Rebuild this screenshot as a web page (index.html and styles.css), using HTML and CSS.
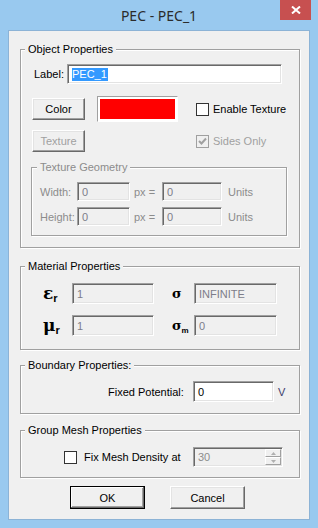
FILE: index.html
```html
<!DOCTYPE html>
<html lang="en">
<head>
    <meta charset="UTF-8">
    <meta name="viewport" content="width=device-width, initial-scale=1.0">
    <title>PEC - PEC_1</title>
    <link rel="stylesheet" href="styles.css">
</head>
<body>
    <div class="window">
        <div class="titlebar">
            <span class="title">PEC - PEC_1</span>
            <button class="close">
                <svg width="10" height="8" viewBox="0 0 10 8"><path d="M1 0.5 L9 7.5 M9 0.5 L1 7.5" stroke="#fff" stroke-width="2"/></svg>
            </button>
        </div>

        <div class="client">
            <div class="group object">
                <div class="group-title">Object Properties</div>
                <div class="row label-row">
                    <span class="lbl">Label:</span>
                    <div class="edit label-edit"><span class="sel">PEC_1</span></div>
                </div>
                <div class="row color-row">
                    <button class="btn">Color</button>
                    <div class="swatch"><div class="swatch-fill"></div></div>
                    <label class="check"><span class="box"></span>Enable Texture</label>
                </div>
                <div class="row tex-row">
                    <button class="btn" disabled>Texture</button>
                    <label class="check off">
                        <span class="box"><svg width="11" height="11" viewBox="0 0 11 11"><path d="M2 5 L4.5 7.5 L9 2.5" fill="none" stroke="#a0a0a0" stroke-width="2"/></svg></span>Sides Only
                    </label>
                </div>

                <div class="group geom">
                    <div class="group-title">Texture Geometry</div>
                    <div class="row geom-row first">
                        <span class="glbl">Width:</span>
                        <div class="edit off g1">0</div>
                        <span class="px">px =</span>
                        <div class="edit off g2">0</div>
                        <span class="units">Units</span>
                    </div>
                    <div class="row geom-row">
                        <span class="glbl">Height:</span>
                        <div class="edit off g1">0</div>
                        <span class="px">px =</span>
                        <div class="edit off g2">0</div>
                        <span class="units">Units</span>
                    </div>
                </div>
            </div>

            <div class="group material">
                <div class="group-title">Material Properties</div>
                <div class="row mat-row first">
                    <span class="sym">&epsilon;<sub>r</sub></span>
                    <div class="edit off m1">1</div>
                    <span class="sym2">&sigma;</span>
                    <div class="edit off m2">INFINITE</div>
                </div>
                <div class="row mat-row">
                    <span class="sym">&mu;<sub>r</sub></span>
                    <div class="edit off m1">1</div>
                    <span class="sym2">&sigma;<sub>m</sub></span>
                    <div class="edit off m2">0</div>
                </div>
            </div>

            <div class="group boundary">
                <div class="group-title">Boundary Properties:</div>
                <div class="row pot-row">
                    <span class="pot-lbl">Fixed Potential:</span>
                    <div class="edit pot-edit">0</div>
                    <span class="volt">V</span>
                </div>
            </div>

            <div class="group mesh">
                <div class="group-title">Group Mesh Properties</div>
                <div class="row mesh-row">
                    <label class="check mesh-check"><span class="box"></span>Fix Mesh Density at</label>
                    <div class="spin">
                        <div class="spin-text">30</div>
                        <div class="spin-btns">
                            <span class="spin-btn"><svg width="5" height="3" viewBox="0 0 5 3"><path d="M2.5 0 L5 3 L0 3 Z" fill="#b0b0b0"/></svg></span>
                            <span class="spin-btn"><svg width="5" height="3" viewBox="0 0 5 3"><path d="M0 0 L5 0 L2.5 3 Z" fill="#b0b0b0"/></svg></span>
                        </div>
                    </div>
                </div>
            </div>

            <div class="actions">
                <button class="btn wide default">OK</button>
                <button class="btn wide">Cancel</button>
            </div>
        </div>
    </div>
</body>
</html>
```

FILE: styles.css
```css
body {
    margin: 0;
    font-family: "Liberation Sans", Arial, sans-serif;
    font-size: 11px;
    color: #000;
}

.window {
    position: relative;
    width: 318px;
    height: 528px;
    background-color: #99c9ef;
    display: flex;
    flex-direction: column;
}

.titlebar {
    height: 30px;
    display: flex;
    align-items: center;
    justify-content: center;
}
.title {
    font-family: "Noto Sans", "Open Sans", sans-serif;
    font-size: 14px;
    color: #2b2b2b;
    margin-top: 1px;
}
.close {
    position: absolute;
    top: 0;
    right: 7px;
    width: 31px;
    height: 20px;
    padding: 0;
    border: none;
    background-color: #c75050;
    display: flex;
    align-items: center;
    justify-content: center;
}

.client {
    box-sizing: border-box;
    height: 490px;
    margin: 0 8px;
    border: 1px solid #8cb3d6;
    background-color: #f0f0f0;
    display: flex;
    flex-direction: column;
    align-items: flex-start;
}

/* group boxes */
.group {
    box-sizing: border-box;
    flex-shrink: 0;
    width: 280px;
    margin-left: 11px;
    border: 1px solid #a0a0a0;
    box-shadow: inset 1px 1px #fff, 1px 1px #fff;
}
.group-title {
    width: fit-content;
    margin: -7px 0 0 4px;
    padding: 0 3px;
    line-height: 13px;
    background-color: #f0f0f0;
}
.object {
    margin-top: 18px;
    height: 199px;
}
.material {
    margin-top: 18px;
    height: 84px;
}
.boundary {
    margin-top: 15px;
    height: 49px;
}
.mesh {
    margin-top: 16px;
    height: 48px;
}

.row {
    display: flex;
    align-items: center;
}

/* buttons */
.btn {
    box-sizing: border-box;
    width: 53px;
    height: 22px;
    padding: 0;
    font: inherit;
    color: #000;
    background-color: #f0f0f0;
    border: 1px solid;
    border-color: #fff #696969 #696969 #fff;
    box-shadow: inset -1px -1px #a0a0a0, inset 1px 1px #e3e3e3;
}
.btn:disabled {
    color: #a0a0a0;
}

/* edit fields */
.edit {
    box-sizing: border-box;
    height: 20px;
    padding-left: 4px;
    background-color: #fff;
    border: 1px solid;
    border-color: #a0a0a0 #fff #fff #a0a0a0;
    box-shadow: inset 1px 1px #696969, inset -1px -1px #e3e3e3;
    display: flex;
    align-items: center;
    white-space: nowrap;
}
.edit.off {
    background-color: #f0f0f0;
    color: #7d7d8a;
}

/* check boxes */
.check {
    display: flex;
    align-items: center;
}
.box {
    box-sizing: border-box;
    width: 13px;
    height: 13px;
    margin-right: 4px;
    border: 1px solid #333;
    background-color: #fff;
    display: flex;
    align-items: center;
    justify-content: center;
}
.check.off {
    color: #a0a0a0;
}
.check.off .box {
    border-color: #a0a0a0;
    background-color: #f0f0f0;
}

/* object properties */
.label-row {
    margin-top: 8px;
    height: 20px;
    padding-left: 13px;
}
.lbl {
    width: 33px;
}
.label-edit {
    width: 215px;
}
.sel {
    background-color: #3399ff;
    color: #fff;
    line-height: 13px;
    padding-right: 1px;
}

.color-row {
    margin-top: 12px;
    height: 26px;
    padding-left: 11px;
}
.swatch {
    box-sizing: border-box;
    width: 81px;
    height: 26px;
    margin-left: 12px;
    padding: 2px;
    background-color: #fff;
    border: 1px solid;
    border-color: #a0a0a0 #fff #fff #a0a0a0;
}
.swatch-fill {
    height: 100%;
    background-color: #ff0000;
}
.color-row .check {
    margin-left: 18px;
}

.tex-row {
    margin-top: 8px;
    height: 22px;
    padding-left: 11px;
}
.tex-row .check {
    margin-left: 111px;
}

/* texture geometry */
.geom {
    width: 256px;
    height: 69px;
    margin-top: 15px;
    margin-left: 10px;
}
.geom .group-title {
    margin-left: 5px;
    color: #8c8c8c;
}
.geom-row {
    height: 19px;
    margin-top: 6px;
    padding-left: 8px;
    color: #8c8c8c;
}
.geom-row.first {
    margin-top: 8px;
}
.geom-row .edit {
    height: 19px;
}
.glbl {
    width: 37px;
}
.g1 {
    width: 53px;
}
.px {
    width: 28px;
    margin-left: 4px;
}
.g2 {
    width: 60px;
}
.units {
    margin-left: 6px;
}

/* material properties */
.mat-row {
    height: 21px;
    margin-top: 11px;
    padding-left: 22px;
}
.mat-row.first {
    margin-top: 10px;
}
.mat-row .edit {
    height: 21px;
}
.sym, .sym2 {
    font-family: "DejaVu Serif", serif;
    font-weight: bold;
    font-size: 17px;
    line-height: 21px;
}
.sym {
    width: 29px;
}
.sym2 {
    width: 22px;
    margin-left: 18px;
    font-size: 13px;
}
.sym sub, .sym2 sub {
    font-family: "Liberation Sans", Arial, sans-serif;
    font-size: 11px;
    vertical-align: -3px;
    line-height: 0;
}
.sym2 sub {
    font-size: 8px;
    letter-spacing: -0.5px;
}
.m1 {
    width: 82px;
}
.m2 {
    width: 83px;
}

/* boundary */
.pot-row {
    height: 21px;
    margin-top: 9px;
    padding-left: 87px;
}
.pot-lbl {
    width: 85px;
}
.pot-edit {
    width: 81px;
    height: 21px;
}
.volt {
    margin-left: 4px;
    color: #3b3b6b;
}

/* mesh */
.mesh-row {
    height: 20px;
    margin-top: 10px;
    padding-left: 43px;
}
.mesh-check {
    width: 129px;
}
.mesh-check .box {
    margin-right: 7px;
}
.spin {
    box-sizing: border-box;
    width: 90px;
    height: 20px;
    display: flex;
    background-color: #f0f0f0;
    border: 1px solid;
    border-color: #a0a0a0 #fff #fff #a0a0a0;
    box-shadow: inset 1px 1px #696969, inset -1px -1px #e3e3e3;
}
.spin-text {
    flex: 1;
    padding-left: 4px;
    color: #8c8c8c;
    display: flex;
    align-items: center;
}
.spin-btns {
    width: 16px;
    margin: 1px 1px 1px 0;
    display: flex;
    flex-direction: column;
}
.spin-btn {
    box-sizing: border-box;
    flex: 1;
    border: 1px solid;
    border-color: #fff #a0a0a0 #a0a0a0 #fff;
    background-color: #f0f0f0;
    display: flex;
    align-items: center;
    justify-content: center;
}

/* dialog buttons */
.actions {
    display: flex;
    gap: 25px;
    margin-top: 8px;
    padding-left: 61px;
}
.btn.wide {
    width: 75px;
    height: 23px;
}
.btn.default {
    border-color: #000;
    box-shadow: inset -1px -1px #696969, inset 1px 1px #fff, inset -2px -2px #a0a0a0;
}
```
